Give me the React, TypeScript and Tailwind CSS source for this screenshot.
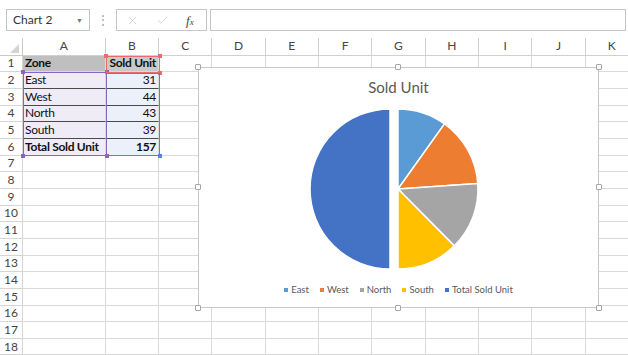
import { X, Check } from "lucide-react";

const cols = ["A", "B", "C", "D", "E", "F", "G", "H", "I", "J", "K"];
const rows = Array.from({ length: 18 }, (_, i) => i + 1);

const data: Record<number, [string, string]> = {
  1: ["Zone", "Sold Unit"],
  2: ["East", "31"],
  3: ["West", "44"],
  4: ["North", "43"],
  5: ["South", "39"],
  6: ["Total Sold Unit", "157"],
};

const legend = [
  { label: "East", color: "bg-[#5B9BD5]" },
  { label: "West", color: "bg-[#ED7D31]" },
  { label: "North", color: "bg-[#A5A5A5]" },
  { label: "South", color: "bg-[#FFC000]" },
  { label: "Total Sold Unit", color: "bg-[#4472C4]" },
];

const Handle = ({ className }: { className: string }) => (
  <div className={`absolute w-[6px] h-[6px] bg-white border border-[#a6a6a6] rounded-[1px] ${className}`} />
);

const SoldUnitChart = () => (
  <div className="absolute left-[198px] top-[66.5px] w-[401px] h-[241px] bg-white border border-[#c8c8c8] flex flex-col items-center">
    <div className="mt-[9px] h-[20px] leading-[20px] text-[15px] text-[#595959]">Sold Unit</div>
    <svg className="mt-[7px]" width="401" height="170" viewBox="198 103.5 401 170">
      <g stroke="#fff" strokeWidth="1.5" strokeLinejoin="round">
        <path d="M390 188.5 L390 268.5 A80 80 0 0 1 390 108.5 Z" fill="#4472C4" />
        <path d="M398 188.5 L398 108.5 A80 80 0 0 1 444.5 123.4 Z" fill="#5B9BD5" />
        <path d="M398 188.5 L444.5 123.4 A80 80 0 0 1 477.8 182.9 Z" fill="#ED7D31" />
        <path d="M398 188.5 L477.8 182.9 A80 80 0 0 1 454.3 245.4 Z" fill="#A5A5A5" />
        <path d="M398 188.5 L454.3 245.4 A80 80 0 0 1 398 268.5 Z" fill="#FFC000" />
      </g>
    </svg>
    <div className="mt-[10px] h-[13px] flex items-center gap-[11px] text-[9.5px] text-[#595959] leading-none">
      {legend.map((l) => (
        <div key={l.label} className="flex items-center gap-[3px]">
          <span className={`w-[4px] h-[4px] ${l.color}`} />
          <span>{l.label}</span>
        </div>
      ))}
    </div>
    <Handle className="-left-[4px] -top-[4px]" />
    <Handle className="left-[196px] -top-[4px]" />
    <Handle className="-right-[4px] -top-[4px]" />
    <Handle className="-left-[4px] top-[116px]" />
    <Handle className="-right-[4px] top-[116px]" />
    <Handle className="-left-[4px] -bottom-[4px]" />
    <Handle className="left-[196px] -bottom-[4px]" />
    <Handle className="-right-[4px] -bottom-[4px]" />
  </div>
);

// coloured outline Excel draws around a chart's source range
const RangeBox = ({ className, dot, corners }: { className: string; dot: string; corners: string[] }) => (
  <div className={`absolute border-[1.5px] ${className}`}>
    {corners.map((c) => (
      <div key={c} className={`absolute w-[4px] h-[4px] ${dot} ${c}`} />
    ))}
  </div>
);

export default function App() {
  return (
    <div className="relative w-[628px] h-[355px] overflow-hidden bg-white font-['Lato','Noto_Sans',sans-serif] text-[#222]">
      {/* formula bar */}
      <div className="h-[38px] flex items-start pt-[9px] pl-[6px]">
        <div className="w-[84px] h-[22px] border border-[#c6c6c6] flex items-center justify-between pl-[6px] pr-[6px] text-[12px] text-[#333]">
          <span>Chart 2</span>
          <span className="text-[7px] text-[#777]">▼</span>
        </div>
        <div className="w-[26px] h-[22px] flex items-center justify-center text-[12px] text-[#a0a0a0]">⋮</div>
        <div className="w-[91px] h-[22px] border border-[#c6c6c6] flex items-center pl-[9px] gap-[17px] text-[#c2c2c2]">
          <X size={13} strokeWidth={1.3} />
          <Check size={13} strokeWidth={1.3} />
          <span className="font-['Liberation_Serif',serif] italic text-[13px] text-[#444] leading-none">
            f<span className="text-[9px]">x</span>
          </span>
        </div>
        <div className="ml-[3px] w-[416px] h-[22px] border border-[#c6c6c6]" />
      </div>

      {/* sheet */}
      <div className="grid grid-cols-[23px_82.67px_repeat(10,53.33px)] grid-rows-[17.67px_repeat(18,16.67px)] text-[12px] tracking-[-0.3px]">
        <div className="border-r border-b border-[#c9c9c9] flex items-end justify-end pr-[3px] pb-[2px]">
          <div className="w-0 h-0 border-l-[9px] border-l-transparent border-b-[9px] border-b-[#d4d4d4]" />
        </div>
        {cols.map((c) => (
          <div key={c} className="border-r border-b border-[#d0d0d0] flex items-center justify-center text-[12px] tracking-normal text-[#444]">
            {c}
          </div>
        ))}
        {rows.map((r) => (
          <div key={r} className="contents">
            <div className="border-r border-b border-[#d6d6d6] flex items-center justify-center text-[12px] tracking-normal text-[#444]">
              {r}
            </div>
            {cols.map((c, ci) => {
              const row = data[r];
              const inTable = row && ci < 2;
              const header = r === 1 && inTable;
              const dark = r >= 2 && r <= 5 && inTable;
              const bg = header
                ? ci === 0
                  ? "bg-[#bfbfbf]"
                  : "bg-[#c9c9c9]"
                : inTable
                  ? ci === 0
                    ? "bg-[#efebf7]"
                    : "bg-[#ebf0fa]"
                  : "";
              return (
                <div
                  key={c}
                  className={`border-r border-b ${dark ? "border-b-[#4a4a4a]" : "border-b-[#dadada]"} border-r-[#dadada] flex items-center px-[2px] whitespace-nowrap overflow-visible leading-none ${bg} ${ci === 1 ? "justify-end" : ""} ${header || r === 6 ? "font-bold" : ""} text-[#111]`}
                >
                  {inTable ? row[ci] : ""}
                </div>
              );
            })}
          </div>
        ))}
      </div>

      {/* range highlights */}
      <RangeBox
        className="left-[23px] top-[71.5px] w-[83.5px] h-[84.5px] border-[#8a63c9]"
        dot="bg-[#8a63c9]"
        corners={["-left-[3px] -top-[3px]", "-right-[3px] -top-[3px]", "-left-[3px] -bottom-[3px]", "-right-[3px] -bottom-[3px]"]}
      />
      <RangeBox
        className="left-[106px] top-[55.5px] w-[53.5px] h-[17px] border-[#ea6b6b]"
        dot="bg-[#ea6b6b]"
        corners={["-left-[3px] -top-[3px]", "-right-[3px] -top-[3px]", "-right-[3px] -bottom-[3px]"]}
      />
      <RangeBox
        className="left-[106px] top-[72.5px] w-[53.5px] h-[83.5px] border-l-0 border-[#4d86e6]"
        dot="bg-[#4d86e6]"
        corners={["-right-[3px] -bottom-[3px]"]}
      />

      <SoldUnitChart />
    </div>
  );
}
